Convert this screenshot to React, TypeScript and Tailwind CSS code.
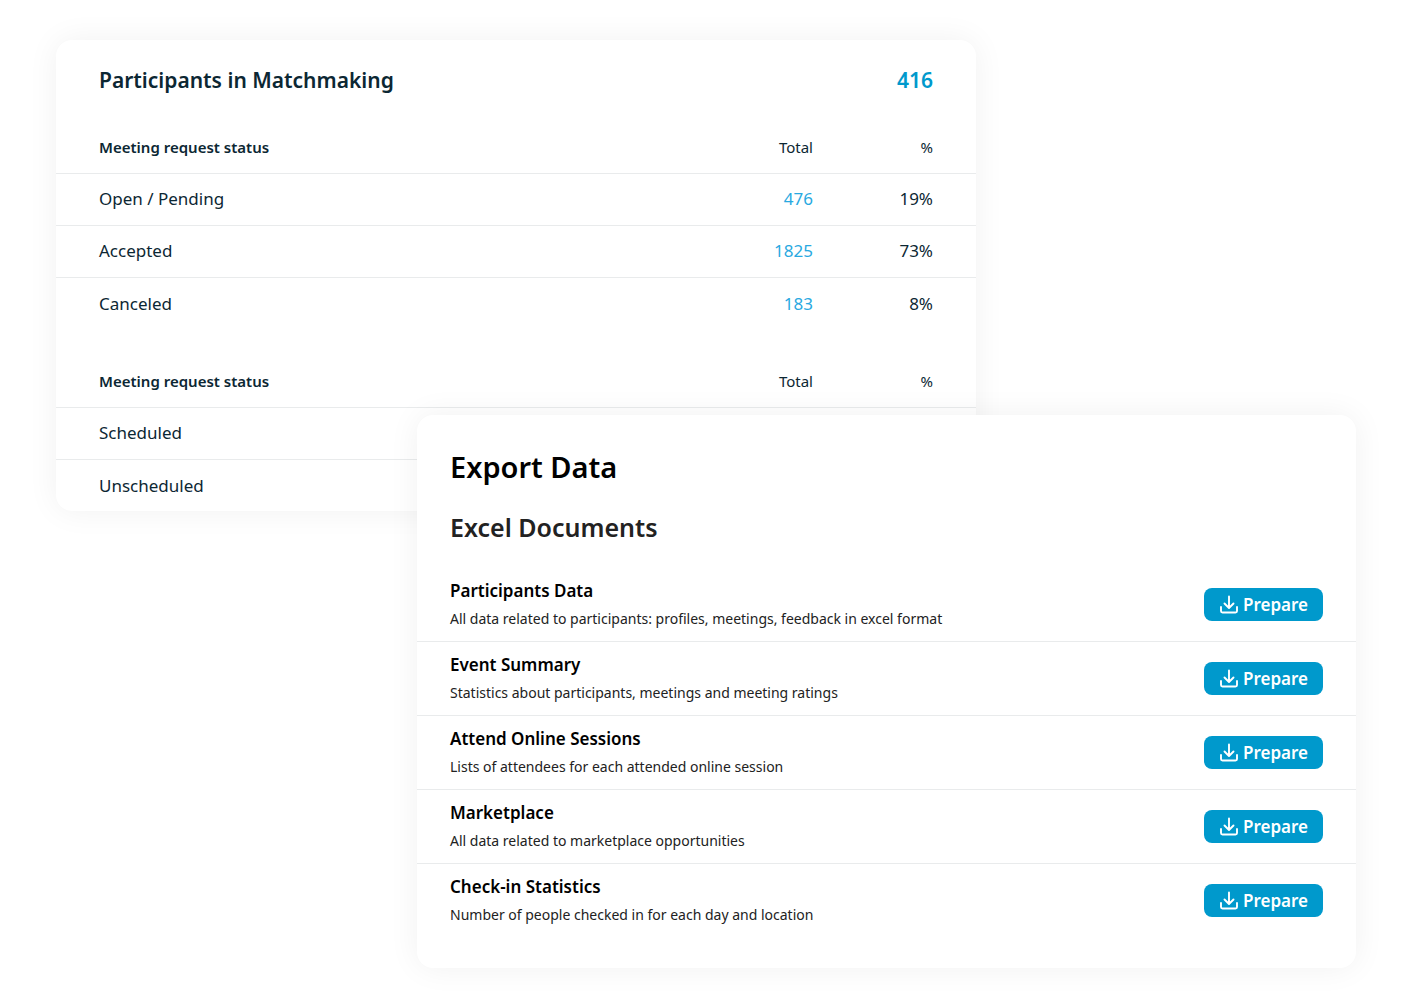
import React from "react";

type StatusRow = { label: string; total?: string; share?: string };
type Doc = { title: string; text: string };

const requests: StatusRow[] = [
  { label: "Open / Pending", total: "476", share: "19%" },
  { label: "Accepted", total: "1825", share: "73%" },
  { label: "Canceled", total: "183", share: "8%" },
];

const schedule: StatusRow[] = [{ label: "Scheduled" }, { label: "Unscheduled" }];

const docs: Doc[] = [
  { title: "Participants Data", text: "All data related to participants: profiles, meetings, feedback in excel format" },
  { title: "Event Summary", text: "Statistics about participants, meetings and meeting ratings" },
  { title: "Attend Online Sessions", text: "Lists of attendees for each attended online session" },
  { title: "Marketplace", text: "All data related to marketplace opportunities" },
  { title: "Check-in Statistics", text: "Number of people checked in for each day and location" },
];

function StatusTable({ rows }: { rows: StatusRow[] }) {
  return (
    <table className="w-full border-collapse">
      <thead>
        <tr className="h-[52px] text-[15px]">
          <th scope="col" className="pl-[43px] text-left font-semibold">Meeting request status</th>
          <th scope="col" className="w-32 text-right font-normal">Total</th>
          <th scope="col" className="w-[163px] pr-[43px] text-right font-normal">%</th>
        </tr>
      </thead>
      <tbody>
        {rows.map((row) => (
          <tr key={row.label} className="h-[52px] border-t border-[#e9ebec] text-[17px]">
            <td className="pl-[43px]">{row.label}</td>
            <td className="text-right text-[#29a9e1]">{row.total}</td>
            <td className="pr-[43px] text-right">{row.share}</td>
          </tr>
        ))}
      </tbody>
    </table>
  );
}

function DownloadIcon() {
  return (
    <svg viewBox="0 0 20 20" className="size-5" fill="none" stroke="currentColor" strokeWidth="1.9" strokeLinecap="round" strokeLinejoin="round" aria-hidden="true">
      <path d="M10 1.500v11M5.500 8.500l4.500 4.500 4.500-4.500M2 12v4q0 1.500 1.500 1.500h13q1.500 0 1.500-1.500v-4" />
    </svg>
  );
}

export default function App() {
  return (
    <main className="min-h-screen bg-white px-14 pt-10 pb-10 font-['Noto_Sans',sans-serif] text-[#0c2733]">
      <section className="mr-[380px] rounded-2xl bg-white shadow-[0_0_32px_rgba(0,0,0,0.06)]">
        <header className="flex h-[81px] items-center justify-between px-[43px] text-[21px] font-semibold">
          <h1>Participants in Matchmaking</h1>
          <span className="text-[#0099cc]">416</span>
        </header>
        <StatusTable rows={requests} />
        <div className="h-[26px]" />
        <StatusTable rows={schedule} />
      </section>
      <section className="relative -mt-24 ml-[361px] rounded-2xl bg-white pt-8 pb-[31px] text-black shadow-[0_0_32px_rgba(0,0,0,0.06)]">
        <h2 className="px-[33px] text-[29px] leading-10 font-semibold">Export Data</h2>
        <h3 className="mt-5 px-[33px] text-[25px] leading-10 font-semibold text-[#222]">Excel Documents</h3>
        <ul className="mt-5">
          {docs.map((doc) => (
            <li key={doc.title} className="flex h-[74px] items-center justify-between border-t border-[#e9ebec] px-[33px] first:border-t-transparent">
              <div>
                <h4 className="text-[17px] leading-7 font-semibold">{doc.title}</h4>
                <p className="text-sm leading-7 text-[#222]">{doc.text}</p>
              </div>
              <button type="button" className="flex h-[33px] items-center gap-1 rounded-lg bg-[#0099cc] px-[15px] text-[17px] font-semibold text-white">
                <DownloadIcon />
                Prepare
              </button>
            </li>
          ))}
        </ul>
      </section>
    </main>
  );
}
